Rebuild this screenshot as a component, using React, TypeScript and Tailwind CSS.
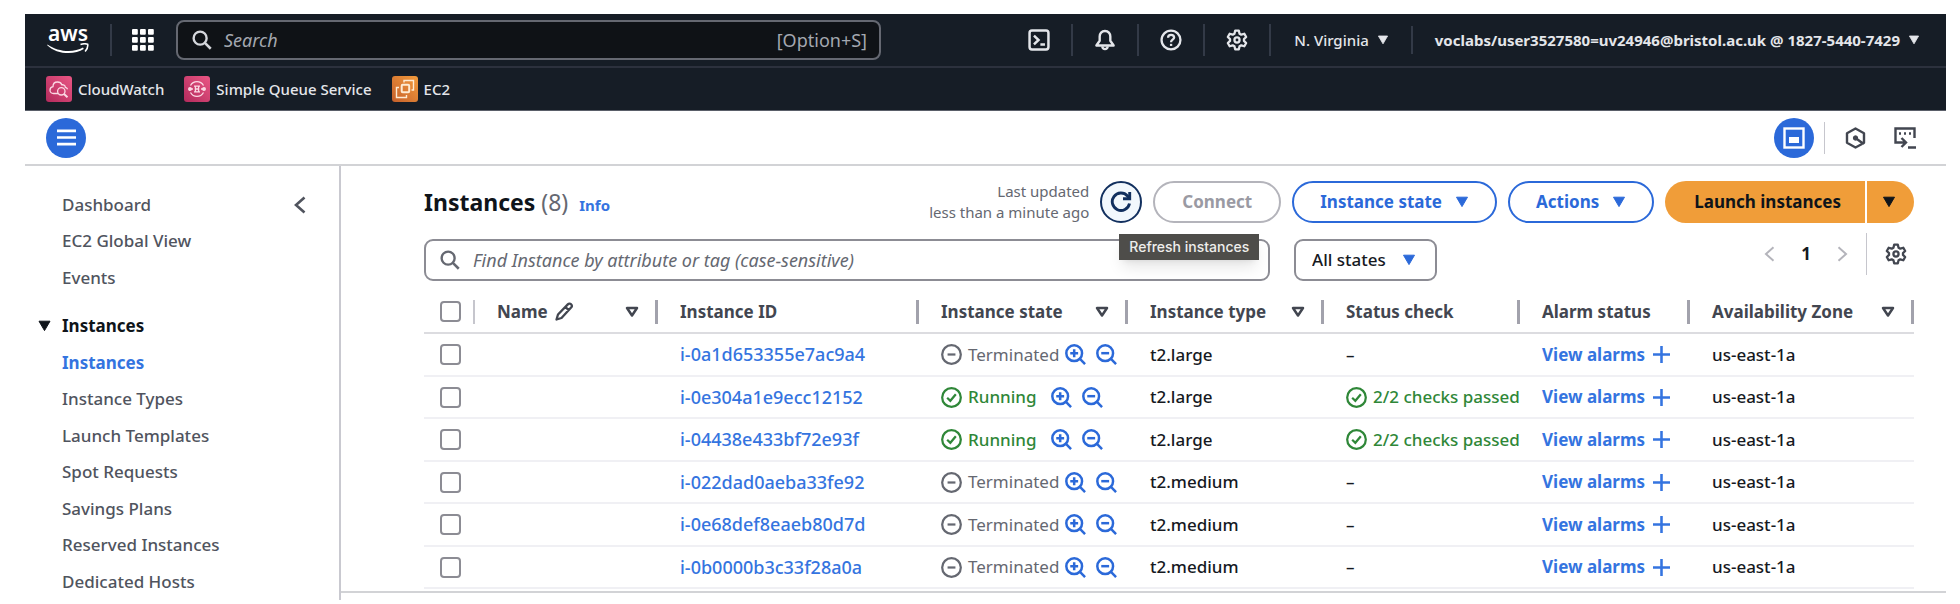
import type { ReactNode } from "react";

type IconProps = { className?: string };

function Svg({ className = "", children, viewBox = "0 0 16 16", sw = 1.7 }: { className?: string; children: ReactNode; viewBox?: string; sw?: number }) {
  return (
    <svg viewBox={viewBox} className={`shrink-0 ${className}`} fill="none" stroke="currentColor" strokeWidth={sw} aria-hidden="true">
      {children}
    </svg>
  );
}

const SearchIcon = ({ className }: IconProps) => (
  <Svg className={className} sw={1.9}>
    <circle cx="6.5" cy="6.5" r="5.2" />
    <path d="M10.3 10.3 15 15" strokeWidth="2" />
  </Svg>
);

const Caret = ({ className }: IconProps) => (
  <Svg className={className} viewBox="0 0 14 12">
    <path d="M1.5 1.2h11L7 10.6z" fill="currentColor" strokeWidth="1" strokeLinejoin="round" />
  </Svg>
);

const FilterCaret = ({ className }: IconProps) => (
  <Svg className={className} viewBox="0 0 14 12" sw={2.5}>
    <path d="M2 2h10L7 9.5z" strokeLinejoin="round" />
  </Svg>
);

const GearIcon = ({ className }: IconProps) => (
  <Svg className={className} viewBox="0 0 24 24" sw={2.5}>
    <path
      strokeLinejoin="round"
      d="M10 1.8h4l.8 3.3 1.9 1.1 3.3-1 2 3.5-2.4 2.3v2l2.4 2.3-2 3.5-3.3-1-1.9 1.1-.8 3.3h-4l-.8-3.3-1.9-1.1-3.3 1-2-3.5L4.4 13v-2L2 8.7l2-3.5 3.3 1 1.9-1.1z"
    />
    <circle cx="12" cy="12" r="2.8" />
  </Svg>
);

const BellIcon = ({ className }: IconProps) => (
  <Svg className={className} viewBox="0 0 24 24" sw={2.6}>
    <path strokeLinejoin="round" d="M12 2.2c-3.6 0-5.8 2.5-5.8 6v4.6L2.6 18h18.8l-3.6-5.2V8.2c0-3.5-2.2-6-5.8-6z" />
    <path d="M9 19c.3 2 1.5 3 3 3s2.7-1 3-3" />
  </Svg>
);

const HelpIcon = ({ className }: IconProps) => (
  <Svg className={className} viewBox="0 0 24 24" sw={2.5}>
    <circle cx="12" cy="12" r="10.3" />
    <path d="M8.8 9.6c0-2 1.4-3.2 3.3-3.2s3.3 1.2 3.3 2.9c0 2.2-3.3 2.4-3.3 4.8v.4" />
    <path d="M12.1 16.2v2.3" />
  </Svg>
);

const ShellIcon = ({ className }: IconProps) => (
  <Svg className={className} viewBox="0 0 24 24" sw={2.7}>
    <rect x="1.7" y="1.7" width="20.6" height="20.6" rx="2.6" />
    <path d="m6.5 7.2 5 4.8-5 4.8M13.5 17h5" />
  </Svg>
);

const GridIcon = ({ className }: IconProps) => (
  <svg viewBox="0 0 22 22" className={className} fill="currentColor" aria-hidden="true">
    {[0, 8, 16].map((y) => [0, 8, 16].map((x) => <rect key={`${x}-${y}`} x={x} y={y} width="5.8" height="5.8" rx="1" />))}
  </svg>
);

const MinusCircle = ({ className }: IconProps) => (
  <Svg className={className}>
    <circle cx="8" cy="8" r="7.1" />
    <path d="M5 8h6" />
  </Svg>
);

const CheckCircle = ({ className }: IconProps) => (
  <Svg className={className}>
    <circle cx="8" cy="8" r="7.1" />
    <path d="m4.7 8.2 2.4 2.3 4.2-5" />
  </Svg>
);

const Zoom = ({ plus }: { plus?: boolean }) => (
  <Svg className="size-[21px]" sw={1.9}>
    <circle cx="7" cy="7" r="6" />
    <path d={plus ? "M4 7h6M7 4v6" : "M4 7h6"} />
    <path d="M11.2 11.2 15.3 15.3" />
  </Svg>
);

const Chevron = ({ className, left, sw = 2.6 }: IconProps & { left?: boolean; sw?: number }) => (
  <Svg className={className} viewBox="0 0 12 18" sw={sw}>
    <path d={left ? "M10.5 1.5 2 9l8.5 7.5" : "M1.5 1.5 10 9l-8.5 7.5"} />
  </Svg>
);

function AwsLogo() {
  return (
    <span className="flex w-[42px] flex-col items-center text-white">
      <span className="h-4 text-[21px] leading-[12px] font-semibold">aws</span>
      <svg viewBox="0 0 42 11" className="h-[11px] w-[42px]" aria-hidden="true">
        <path d="M.5 1.4c10 7.4 26 8.6 35.5 3.2l.8 1.5C27 12.5 9 11.2.2 2.2z" fill="currentColor" />
        <path d="M33.5 1.5c2.5-.8 5.5-.9 7.2-.2.3 2.3-.8 5.3-2.6 7.2" fill="none" stroke="currentColor" strokeWidth="1.6" />
      </svg>
    </span>
  );
}

const CloudWatchIcon = () => (
  <span className="flex size-[26px] items-center justify-center rounded-[3px] bg-linear-to-tr from-[#b32a5c] to-[#ea5685] text-[#fbd9e4]">
    <Svg className="size-5" viewBox="0 0 20 20" sw={1.3}>
      <path d="M9 14.5H4.5C2.5 14.5 1 13 1 11.2S2.3 8 4 7.7C4 4.8 6 3 8.5 3c2.2 0 3.7 1.1 4.3 2.8 1.9-.3 3.4.8 3.6 2.6 1 .3 1.8 1 2.2 1.9" />
      <circle cx="12.3" cy="12.3" r="3.7" />
      <path d="m15 15 3.5 3.3" strokeWidth="2" />
    </Svg>
  </span>
);

const QueueIcon = () => (
  <span className="flex size-[26px] items-center justify-center rounded-[3px] bg-linear-to-tr from-[#b32a5c] to-[#ea5685] text-[#fbd9e4]">
    <Svg className="size-5" viewBox="0 0 20 20" sw={1.3}>
      <path d="M3.5 6.5a7.4 7.4 0 0 1 13 0M3.5 13.5a7.4 7.4 0 0 0 13 0" />
      <path d="M7 7.2h6M7 12.8h6M8.4 7v6M11.6 7v6M8 10h4" />
      <circle cx="3" cy="10" r="1.3" fill="currentColor" />
      <circle cx="17" cy="10" r="1.3" fill="currentColor" />
      <path d="M4 10h2M14 10h2" />
    </Svg>
  </span>
);

const Ec2Icon = () => (
  <span className="flex size-[26px] items-center justify-center rounded-[3px] bg-linear-to-tr from-[#c5602b] to-[#f29b3c] text-[#fdebd3]">
    <Svg className="size-5" viewBox="0 0 20 20" sw={1.4}>
      <rect x="6.7" y="5.7" width="7.5" height="7.5" rx="1" strokeWidth="2" />
      <path d="M9 3.5v-2h9.5V11h-2M4 8.5H1.5v10h10V16" />
    </Svg>
  </span>
);

const Divider = ({ className }: IconProps) => <span className={`w-[2px] shrink-0 bg-[#333a47] ${className ?? ""}`} />;

const headerTools = [
  { label: "CloudShell", icon: <ShellIcon className="size-[22px]" /> },
  { label: "Notifications", icon: <BellIcon className="size-[22px]" /> },
  { label: "Support", icon: <HelpIcon className="size-[22px]" /> },
  { label: "Settings", icon: <GearIcon className="size-[22px]" /> },
];

function TopBar() {
  return (
    <header className="border-b border-[#5a5f69] bg-[#161d26] text-[#e4e6ea]">
      <div className="flex h-[54px] items-center border-b-2 border-[#2c313d] pr-[26px] pl-[22px]">
        <a href="#home" aria-label="AWS home"><AwsLogo /></a>
        <Divider className="ml-[21px] h-8" />
        <button type="button" aria-label="Services" className="ml-5 text-white"><GridIcon className="size-[22px]" /></button>
        <label className="ml-[22px] flex h-10 max-w-[705px] min-w-0 flex-1 items-center rounded-lg border-2 border-[#656871] bg-[#0f1216] pr-3 pl-[14px]">
          <SearchIcon className="size-5 text-[#d5d7dc]" />
          <input type="search" aria-label="Search" placeholder="Search" className="ml-3 min-w-0 flex-1 bg-transparent text-[18px] outline-none placeholder:text-[#a4a8b0] placeholder:italic" />
          <span className="text-[18px] text-[#a4a8b0]">[Option+S]</span>
        </label>
        <div className="ml-auto flex items-center">
          {headerTools.map((t) => (
            <span key={t.label} className="flex items-center">
              <button type="button" aria-label={t.label}>{t.icon}</button>
              <Divider className="mx-[21px] h-8" />
            </span>
          ))}
          <button type="button" className="flex items-center gap-2 pl-[2px] text-[15px] font-medium whitespace-nowrap">
            N. Virginia <Caret className="h-[10px] w-3" />
          </button>
          <Divider className="mx-[22px] h-7" />
          <button type="button" className="flex items-center gap-2 text-[15px] font-bold whitespace-nowrap">
            voclabs/user3527580=uv24946@bristol.ac.uk @ 1827-5440-7429 <Caret className="h-[10px] w-3" />
          </button>
        </div>
      </div>
      <nav aria-label="Favorites" className="flex h-[42px] items-center gap-5 pl-[21px] text-[15px] font-medium">
        <a href="#cloudwatch" className="flex items-center gap-1.5"><CloudWatchIcon />CloudWatch</a>
        <a href="#sqs" className="flex items-center gap-1.5"><QueueIcon />Simple Queue Service</a>
        <a href="#ec2" className="flex items-center gap-1.5"><Ec2Icon />EC2</a>
      </nav>
    </header>
  );
}

function ToolStrip() {
  return (
    <div className="flex h-[55px] items-center border-b-2 border-[#d2d3d6] pr-[30px] pl-[21px] text-[#424650]">
      <button type="button" aria-label="Open navigation" className="flex size-10 items-center justify-center rounded-full bg-[#2b69d9] text-white">
        <Svg className="size-[19px]" sw={2.2}><path d="M0 2.4h16M0 8h16M0 13.6h16" /></Svg>
      </button>
      <button type="button" aria-label="Split panel" className="ml-auto flex size-10 items-center justify-center rounded-full bg-[#2b69d9] text-white">
        <Svg className="size-[22px]" viewBox="0 0 22 22" sw={2.4}>
          <rect x="1.5" y="1.5" width="19" height="19" />
          <rect x="6.5" y="10.5" width="9" height="5" fill="currentColor" strokeWidth="1" />
        </Svg>
      </button>
      <span className="ml-[10px] h-8 w-px bg-[#c6c6cd]" />
      <button type="button" aria-label="Resource settings" className="ml-5">
        <Svg className="h-[22px] w-[21px]" viewBox="0 0 21 22" sw={2.4}>
          <path d="M17 17l-6.5 3.5L2 15.8V6.2l8.5-4.7L19 6.2v9.6l-1 .7-7.5-5.5" strokeLinejoin="round" />
          <circle cx="10.5" cy="11" r="2.2" fill="currentColor" strokeWidth="1" />
        </Svg>
      </button>
      <button type="button" aria-label="Terminal panel" className="ml-[28px]">
        <Svg className="size-[22px]" viewBox="0 0 22 22" sw={2.4}>
          <path d="M20.5 11V1.5h-19v14H11M7.5 11l4.5 4.5L7.5 20M14 20.5h8" />
          <path d="M5 6.5h2M10 6.5h2M15 6.5h2" />
        </Svg>
      </button>
    </div>
  );
}

const topLinks = ["Dashboard", "EC2 Global View", "Events"];
const instanceLinks = ["Instances", "Instance Types", "Launch Templates", "Spot Requests", "Savings Plans", "Reserved Instances", "Dedicated Hosts"];

function Sidebar() {
  return (
    <aside className="relative w-[316px] shrink-0 border-r-2 border-[#c9c9d0] pt-5 text-[17px] font-medium text-[#50545e]">
      <button type="button" aria-label="Close navigation" className="absolute top-[30px] right-[33px]">
        <Chevron left className="h-[18px] w-3" />
      </button>
      <ul className="pl-[37px]">
        {topLinks.map((l) => (
          <li key={l} className="flex h-9 items-center odd:h-[37px]"><a href="#nav">{l}</a></li>
        ))}
      </ul>
      <button type="button" className="mt-[11px] flex h-[37px] items-center gap-[10px] pl-3 font-bold text-[#0f141a]">
        <Caret className="h-3 w-[15px]" /> Instances
      </button>
      <ul className="pl-[37px]">
        {instanceLinks.map((l, i) => (
          <li key={l} className="flex h-9 items-center odd:h-[37px]">
            <a href="#nav" aria-current={i === 0 ? "page" : undefined} className={i === 0 ? "font-bold text-[#3474e0]" : ""}>{l}</a>
          </li>
        ))}
      </ul>
    </aside>
  );
}

const columns = [
  { label: "Name", filter: true, edit: true },
  { label: "Instance ID" },
  { label: "Instance state", filter: true },
  { label: "Instance type", filter: true },
  { label: "Status check" },
  { label: "Alarm status" },
  { label: "Availability Zone", filter: true },
];

const rows = [
  { id: "i-0a1d653355e7ac9a4", running: false, type: "t2.large" },
  { id: "i-0e304a1e9ecc12152", running: true, type: "t2.large" },
  { id: "i-04438e433bf72e93f", running: true, type: "t2.large" },
  { id: "i-022dad0aeba33fe92", running: false, type: "t2.medium" },
  { id: "i-0e68def8eaeb80d7d", running: false, type: "t2.medium" },
  { id: "i-0b0000b3c33f28a0a", running: false, type: "t2.medium" },
];

const Check = ({ label }: { label: string }) => (
  <input type="checkbox" aria-label={label} className="ml-4 block size-[21px] appearance-none rounded-[4px] border-2 border-[#8c8c94] bg-white" />
);

function InstanceTable() {
  return (
    <table className="mt-[10px] w-full table-fixed border-collapse text-left text-[17px] font-medium">
      <colgroup>
        <col className="w-[51px]" />
        <col className="w-[183px]" />
        <col className="w-[261px]" />
        <col className="w-[209px]" />
        <col className="w-[196px]" />
        <col className="w-[196px]" />
        <col className="w-[170px]" />
        <col className="w-[224px]" />
      </colgroup>
      <thead>
        <tr className="h-[42px] border-b-2 border-[#dcdce0] text-[#424650]">
          <th className="p-0">
            <span className="flex items-center justify-between">
              <Check label="Select all instances" />
              <span className="h-6 w-[2px] bg-[#c6c6cd]" />
            </span>
          </th>
          {columns.map((c) => (
            <th key={c.label} className="p-0 font-bold">
              <span className="flex items-center pl-[22px] whitespace-nowrap">
                {c.label}
                {c.edit && (
                  <Svg className="ml-[7px] size-[19px]" viewBox="0 0 19 19" sw={2.3}>
                    <path d="M1.5 17.5 3 12.5 12.8 2.4c1-1 2.4-1 3.3-.1s.9 2.3 0 3.3L6.5 16zM10.5 5l3.6 3.6" strokeLinejoin="round" />
                  </Svg>
                )}
                <span className="ml-auto flex items-center gap-4">
                  {c.filter && <button type="button" aria-label={`Sort by ${c.label}`}><FilterCaret className="h-3 w-[14px]" /></button>}
                  <span className="h-6 w-[3px] bg-[#a2a2ac]" />
                </span>
              </span>
            </th>
          ))}
        </tr>
      </thead>
      <tbody>
        {rows.map((r) => (
          <tr key={r.id} className="h-[42px] border-b-2 border-[#f0f0f4] text-[#16191f] odd:h-[43px]">
            <td className="p-0"><Check label={`Select ${r.id}`} /></td>
            <td className="p-0" />
            <td className="p-0 pl-[22px] text-[18px] text-[#3474e0]"><a href="#instance">{r.id}</a></td>
            <td className="p-0 pl-[22px]">
              <span className="flex items-center">
                <span className={r.running ? "flex items-center gap-1.5 text-[#2f8738]" : "flex items-center gap-1.5 font-normal text-[#656871]"}>
                  {r.running ? <CheckCircle className="size-[21px]" /> : <MinusCircle className="size-[21px]" />}
                  {r.running ? "Running" : "Terminated"}
                </span>
                <span className={r.running ? "ml-[14px] flex gap-[10px] text-[#2b69d9]" : "ml-1.5 flex gap-[10px] text-[#2b69d9]"}>
                  <button type="button" aria-label="Include state in filter"><Zoom plus /></button>
                  <button type="button" aria-label="Exclude state from filter"><Zoom /></button>
                </span>
              </span>
            </td>
            <td className="p-0 pl-[22px]">{r.type}</td>
            <td className="p-0 pl-[22px]">
              {r.running ? (
                <span className="flex items-center gap-1.5 overflow-hidden whitespace-nowrap text-[#2f8738]">
                  <CheckCircle className="size-[21px]" />2/2 checks passed
                </span>
              ) : (
                "–"
              )}
            </td>
            <td className="p-0 pl-[22px]">
              <a href="#alarms" className="flex items-center gap-2 font-bold whitespace-nowrap text-[#3474e0]">
                View alarms
                <Svg className="size-[17px]" sw={2.4}><path d="M8 0v16M0 8h16" /></Svg>
              </a>
            </td>
            <td className="p-0 pl-[22px]">us-east-1a</td>
          </tr>
        ))}
      </tbody>
    </table>
  );
}

function InstancesPanel() {
  return (
    <main className="min-w-0 flex-1 pb-[6px]">
      <div className="border-b-2 border-[#d2d3d6] pt-[15px] pr-8 pb-[2px] pl-[83px]">
        <div className="flex items-center gap-[11px] text-[17px] font-bold whitespace-nowrap">
          <h1 className="text-[23px] text-[#0f141a]">Instances <span className="font-normal text-[#656871]">(8)</span></h1>
          <a href="#info" className="mt-1.5 text-[15px] text-[#3474e0]">Info</a>
          <p className="ml-auto text-right text-[15px] leading-[21px] font-normal text-[#656871]">Last updated<br />less than a minute ago</p>
          <span className="relative">
            <button type="button" aria-label="Refresh instances" className="flex size-[42px] items-center justify-center rounded-full border-2 border-[#12305f] bg-[#f2f8fd] text-[#12305f]">
              <Svg className="size-[22px]" viewBox="0 0 22 22" sw={2.9}>
                <path d="M19.5 12.5A8.7 8.7 0 1 1 17.5 5l2 2.3" />
                <path d="M19.7 1v6.8H13" />
              </Svg>
            </button>
            <span role="tooltip" className="absolute top-[53px] left-[19px] z-10 bg-[#4e4d4a] px-[10px] font-[Inter,sans-serif] text-[14px] leading-[26px] font-medium text-[#eeeeec] shadow-lg">Refresh instances</span>
          </span>
          <button type="button" disabled className="h-[42px] rounded-full border-2 border-[#b4b4bb] px-[27px] text-[#9a9aa3]">Connect</button>
          <button type="button" className="flex h-[42px] items-center gap-[13px] rounded-full border-2 border-[#2b69d9] px-[26px] text-[#2b69d9]">Instance state <Caret className="h-3 w-[14px]" /></button>
          <button type="button" className="flex h-[42px] items-center gap-[13px] rounded-full border-2 border-[#2b69d9] px-[26px] text-[#2b69d9]">Actions <Caret className="h-3 w-[14px]" /></button>
          <div className="flex gap-[2px] text-[#0f141a]">
            <button type="button" className="h-[42px] rounded-l-full bg-[#f09d39] pr-6 pl-[29px]">Launch instances</button>
            <button type="button" aria-label="More launch options" className="h-[42px] rounded-r-full bg-[#f09d39] pr-[18px] pl-[15px]"><Caret className="h-3 w-[14px]" /></button>
          </div>
        </div>
        <div className="mt-4 flex items-start">
          <label className="flex h-[42px] max-w-[846px] min-w-0 flex-1 items-center rounded-[9px] border-2 border-[#8c8c94] pr-3 pl-[14px]">
            <SearchIcon className="size-5 text-[#656871]" />
            <input type="text" aria-label="Find instance" placeholder="Find Instance by attribute or tag (case-sensitive)" className="ml-[13px] min-w-0 flex-1 text-[18px] outline-none placeholder:text-[#656871] placeholder:italic" />
          </label>
          <span className="relative ml-6 flex items-center text-[#16191f]">
            <select aria-label="Instance states" className="h-[42px] w-[143px] appearance-none rounded-[9px] border-2 border-[#8c8c94] pl-4 text-[17px] font-medium">
              <option>All states</option>
            </select>
            <Caret className="pointer-events-none absolute right-[21px] h-3 w-[14px] text-[#2b69d9]" />
          </span>
          <div className="-mt-1.5 ml-auto flex items-center text-[17px] font-bold text-[#16191f]">
            <button type="button" aria-label="Previous page" className="text-[#b4b4bb]"><Chevron left className="h-4 w-[11px]" sw={2.2} /></button>
            <button type="button" className="mx-[26px]">1</button>
            <button type="button" aria-label="Next page" className="text-[#b4b4bb]"><Chevron className="h-4 w-[11px]" sw={2.2} /></button>
            <span className="ml-[18px] h-[42px] w-px bg-[#c6c6cd]" />
            <button type="button" aria-label="Preferences" className="mr-[7px] ml-[18px] text-[#424650]"><GearIcon className="size-[22px]" /></button>
          </div>
        </div>
        <InstanceTable />
      </div>
    </main>
  );
}

export default function App() {
  return (
    <div className="bg-white pt-[14px] pr-[14px] pl-[25px] font-['Noto_Sans','Open_Sans',sans-serif] text-[#16191f]">
      <TopBar />
      <ToolStrip />
      <div className="flex">
        <Sidebar />
        <InstancesPanel />
      </div>
    </div>
  );
}
